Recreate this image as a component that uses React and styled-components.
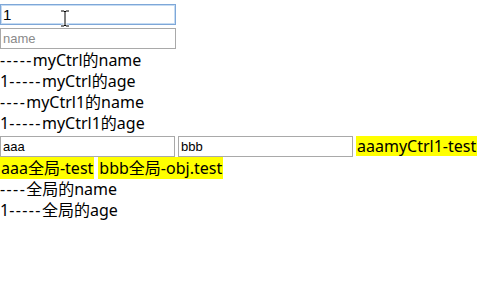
import styled, { createGlobalStyle } from "styled-components";

const Global = createGlobalStyle`
  html, body {
    margin: 0;
    padding: 0;
    background: #ffffff;
  }
  body {
    font-family: "Noto Sans", "Noto Sans CJK SC", sans-serif;
    font-size: 16px;
    color: #000000;
  }
`;

const Page = styled.div`
  position: relative;
  width: 484px;
  height: 285px;
  padding-top: 4px;
  box-sizing: border-box;
`;

const Field = styled.input`
  display: block;
  box-sizing: border-box;
  width: 176px;
  height: ${(p) => p.$h || 21}px;
  margin: 0 0 ${(p) => p.$gap || 0}px 0;
  padding: 1px 2px;
  font-family: "Liberation Sans", "Noto Sans CJK SC", sans-serif;
  font-size: ${(p) => p.$fs || 13}px;
  color: #000;
  border: 1px solid ${(p) => (p.$focus ? "#7ea7d8" : "#a9a9a9")};
  box-shadow: ${(p) => (p.$focus ? "inset 0 0 0 1px #c6dcf3" : "none")};
  outline: none;
  border-radius: 0;
  &::placeholder {
    color: #8a8a8a;
    font-size: 13px;
  }
`;

const Line = styled.div`
  height: 21px;
  line-height: 22px;
  white-space: nowrap;
`;

const Dashes = styled.span`
  letter-spacing: 1.4px;
`;

const Row = styled.div`
  display: flex;
  align-items: center;
  gap: 3px;
  height: 22px;
  margin-top: 2px;
  white-space: nowrap;
`;

const InlineField = styled(Field)`
  display: inline-block;
  width: 175px;
  height: 21px;
  border-color: #a9a9a9;
`;

const Mark = styled.span`
  background: #ffff00;
  line-height: 20px;
  padding: 0 1px;
  margin-left: ${(p) => p.$ml || 0}px;
`;

const Cursor = styled.svg`
  position: absolute;
  left: 60px;
  top: 10px;
`;

export default function App() {
  return (
    <Page>
      <Global />
      <Field $focus $fs={15} defaultValue="1" $gap={3} autoFocus />
      <Field placeholder="name" $h={21} />
      <Line><Dashes>-----</Dashes>myCtrl的name</Line>
      <Line>1<Dashes>-----</Dashes>myCtrl的age</Line>
      <Line><Dashes>----</Dashes>myCtrl1的name</Line>
      <Line>1<Dashes>-----</Dashes>myCtrl1的age</Line>
      <Row>
        <InlineField defaultValue="aaa" />
        <InlineField defaultValue="bbb" />
        <Mark>aaamyCtrl1-test</Mark>
      </Row>
      <Line>
        <Mark>aaa全局-test</Mark>
        <Mark $ml={4}>bbb全局-obj.test</Mark>
      </Line>
      <Line><Dashes>----</Dashes>全局的name</Line>
      <Line>1<Dashes>-----</Dashes>全局的age</Line>
      <Cursor width="10" height="17" viewBox="0 0 10 17">
        <path d="M1 1h3l1 1 1-1h3M5 2v13M1 16h3l1-1 1 1h3" fill="none" stroke="#fff" strokeWidth="3" />
        <path d="M1 1h3l1 1 1-1h3M5 2v13M1 16h3l1-1 1 1h3" fill="none" stroke="#000" strokeWidth="1" />
      </Cursor>
    </Page>
  );
}
